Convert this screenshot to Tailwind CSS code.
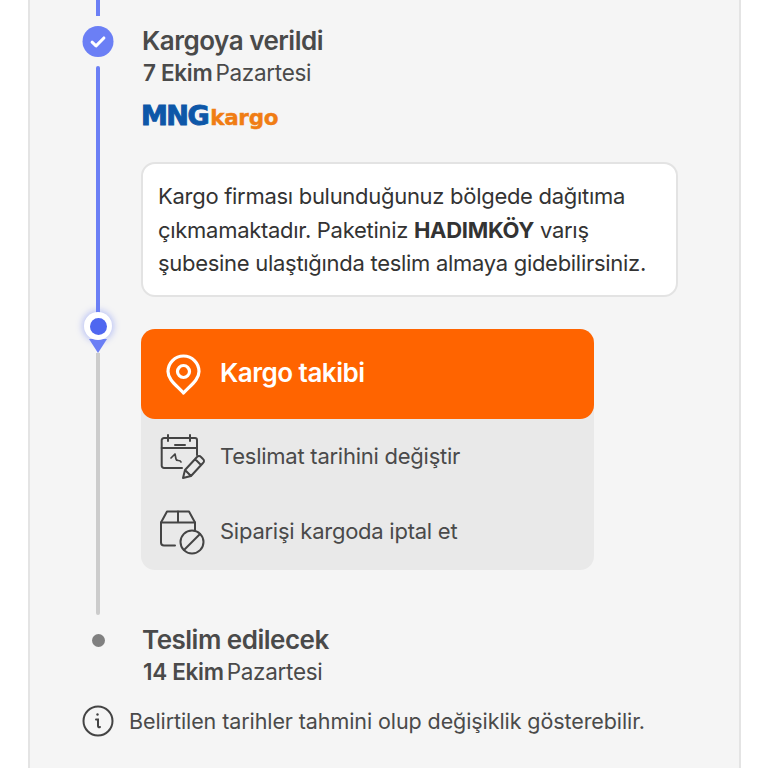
<!DOCTYPE html>
<html lang="tr">
  <head>
    <meta charset="UTF-8" />
    <title>Kargo durumu</title>
    <script src="https://cdn.jsdelivr.net/npm/@tailwindcss/browser@4"></script>
  </head>
  <body class="bg-white font-['Inter',sans-serif] text-[#4a4a4a]">
    <div class="ml-[28px] w-[713px] h-[768px] overflow-hidden bg-[#f5f5f5] border-x-2 border-[#e4e4e4] flex flex-col">
      <div class="flex">
        <!-- timeline column -->
        <div class="ml-[52px] w-[32px] flex flex-col items-center shrink-0">
          <div class="w-[4px] h-[16px] bg-[#6b7ff5]"></div>
          <div class="mt-[10px] w-[31px] h-[31px] rounded-full bg-[#6b7ff5] flex items-center justify-center -translate-x-[0.5px]">
            <svg width="21" height="21" viewBox="0 0 16 16" fill="none" stroke="#fff" stroke-width="2.300" stroke-linecap="round" stroke-linejoin="round"><path d="M3.500 8.500l3 2.800 6-6" /></svg>
          </div>
          <div class="mt-[9px] w-[4px] h-[249px] bg-[#6b7ff5] rounded-t-full"></div>
          <div class="relative z-10 -mt-[3px] w-[28px] h-[28px] rounded-full bg-white shadow-[0_0_6px_2px_rgba(107,127,245,0.4)] flex items-center justify-center">
            <div class="w-[17px] h-[17px] rounded-full bg-[#4f67f0]"></div>
          </div>
          <div class="-mt-[1px] w-0 h-0 border-x-[9px] border-x-transparent border-t-[14px] border-t-[#6b7ff5]"></div>
          <div class="w-[4px] h-[262px] bg-[#cccccc] rounded-b-full"></div>
          <div class="mt-[19px] w-[13px] h-[13px] rounded-full bg-[#808080]"></div>
        </div>

        <!-- content column -->
        <div class="ml-[27px] flex-1 flex flex-col">
          <h2 class="mt-[26px] ml-[1px] text-[26px] leading-[30px] font-semibold tracking-[-0.5px]">Kargoya verildi</h2>
          <p class="mt-[2px] ml-[2px] text-[22.5px] leading-[30px] tracking-[-0.3px]"><span class="font-semibold mr-[-3px]">7 Ekim</span> Pazartesi</p>

          <div class="mt-[13px] h-[30px] flex items-baseline leading-none font-['DejaVu_Sans',sans-serif] font-bold">
            <span class="text-[27px] leading-[30px] text-[#0d57a8] tracking-[-1.5px] [-webkit-text-stroke:1px_#0d57a8]">MNG</span>
            <span class="ml-[2px] text-[21.5px] leading-[24px] text-[#f07d14] tracking-[-0.3px] [-webkit-text-stroke:0.4px_#f07d14]">kargo</span>
          </div>

          <div class="mt-[31px] w-[537px] h-[135px] rounded-[14px] bg-white border-2 border-[#e3e3e3] pl-[15px] pt-[16px] text-[22px] leading-[33.5px] tracking-[-0.29px] text-[#333]">
            Kargo firması bulunduğunuz bölgede dağıtıma<br />
            çıkmamaktadır. Paketiniz <b class="font-bold">HADIMKÖY</b> varış<br />
            şubesine ulaştığında teslim almaya gidebilirsiniz.
          </div>

          <div class="mt-[32px] w-[453px] rounded-[14px] bg-[#e9e9e9]">
            <div class="h-[90px] rounded-[14px] bg-[#ff6400] flex items-center pl-[25px] text-white">
              <svg width="35" height="41" viewBox="0 0 35 41" fill="none" stroke="#fff" stroke-width="3.2" stroke-linejoin="round"><path d="M17.500 39C10 31 2 25.500 2 17.500a15.500 15.500 0 0 1 31 0C33 25.500 25 31 17.500 39z" /><circle cx="17.500" cy="17.500" r="6" /></svg>
              <span class="ml-[19px] -mt-[3px] text-[26px] font-semibold tracking-[-0.5px]">Kargo takibi</span>
            </div>
            <div class="h-[76px] flex items-center pl-[18px]">
              <svg width="46" height="46" viewBox="0 0 46 46" fill="none" stroke="#444" stroke-width="2" stroke-linecap="round" stroke-linejoin="round">
                <path d="M23 34H5a2.300 2.300 0 0 1-2.300-2.300V6.300A2.300 2.300 0 0 1 5 4h31a2 2 0 0 1 2 2v15" />
                <path d="M2.700 14H38M9 1v6M31 1v6M16 11h10" />
                <path d="M12 24l4-4 1 5c.5 3 4 0 5 3" stroke-width="1.700" />
                <path d="M24 44l2-8L38 23a2.500 2.500 0 0 1 4 0l2 2a2.500 2.500 0 0 1 0 4L32 42zM26 36l6 6M36 25l6 6" />
              </svg>
              <span class="ml-[15px] -mt-[2px] text-[22px] tracking-[-0.25px]">Teslimat tarihini değiştir</span>
            </div>
            <div class="h-[75px] pb-[2px] flex items-center pl-[18px]">
              <svg width="46" height="46" viewBox="0 0 46 46" fill="none" stroke="#444" stroke-width="2" stroke-linecap="round" stroke-linejoin="round">
                <path d="M16 36.500H5a3 3 0 0 1-3-3V13.500L8 2.500h22l6 11V21" />
                <path d="M2 13.500h34M19 2.500v11" />
                <circle cx="33" cy="33" r="11.500" />
                <path d="M25 41l16-16" />
              </svg>
              <span class="ml-[15px] text-[22px] tracking-[-0.25px]">Siparişi kargoda iptal et</span>
            </div>
          </div>

          <h2 class="mt-[55px] ml-[1px] text-[26px] leading-[30px] font-semibold tracking-[-0.5px]">Teslim edilecek</h2>
          <p class="mt-[2px] ml-[2px] text-[22.5px] leading-[30px] tracking-[-0.3px]"><span class="font-semibold mr-[-3px]">14 Ekim</span> Pazartesi</p>
        </div>
      </div>

      <!-- note -->
      <div class="mt-[18px] ml-[52px] flex items-center">
        <svg width="32" height="32" viewBox="0 0 32 32" fill="none" stroke="#444" stroke-width="2" stroke-linecap="round"><circle cx="16" cy="16" r="14.500" /><path d="M14 14.500h2v6.500c0 1 .8 1.500 2 1" /><circle cx="15.500" cy="9.500" r="1.200" fill="#444" stroke="none" /></svg>
        <span class="ml-[15px] text-[21.5px] tracking-[-0.09px]">Belirtilen tarihler tahmini olup değişiklik gösterebilir.</span>
      </div>
    </div>
  </body>
</html>
